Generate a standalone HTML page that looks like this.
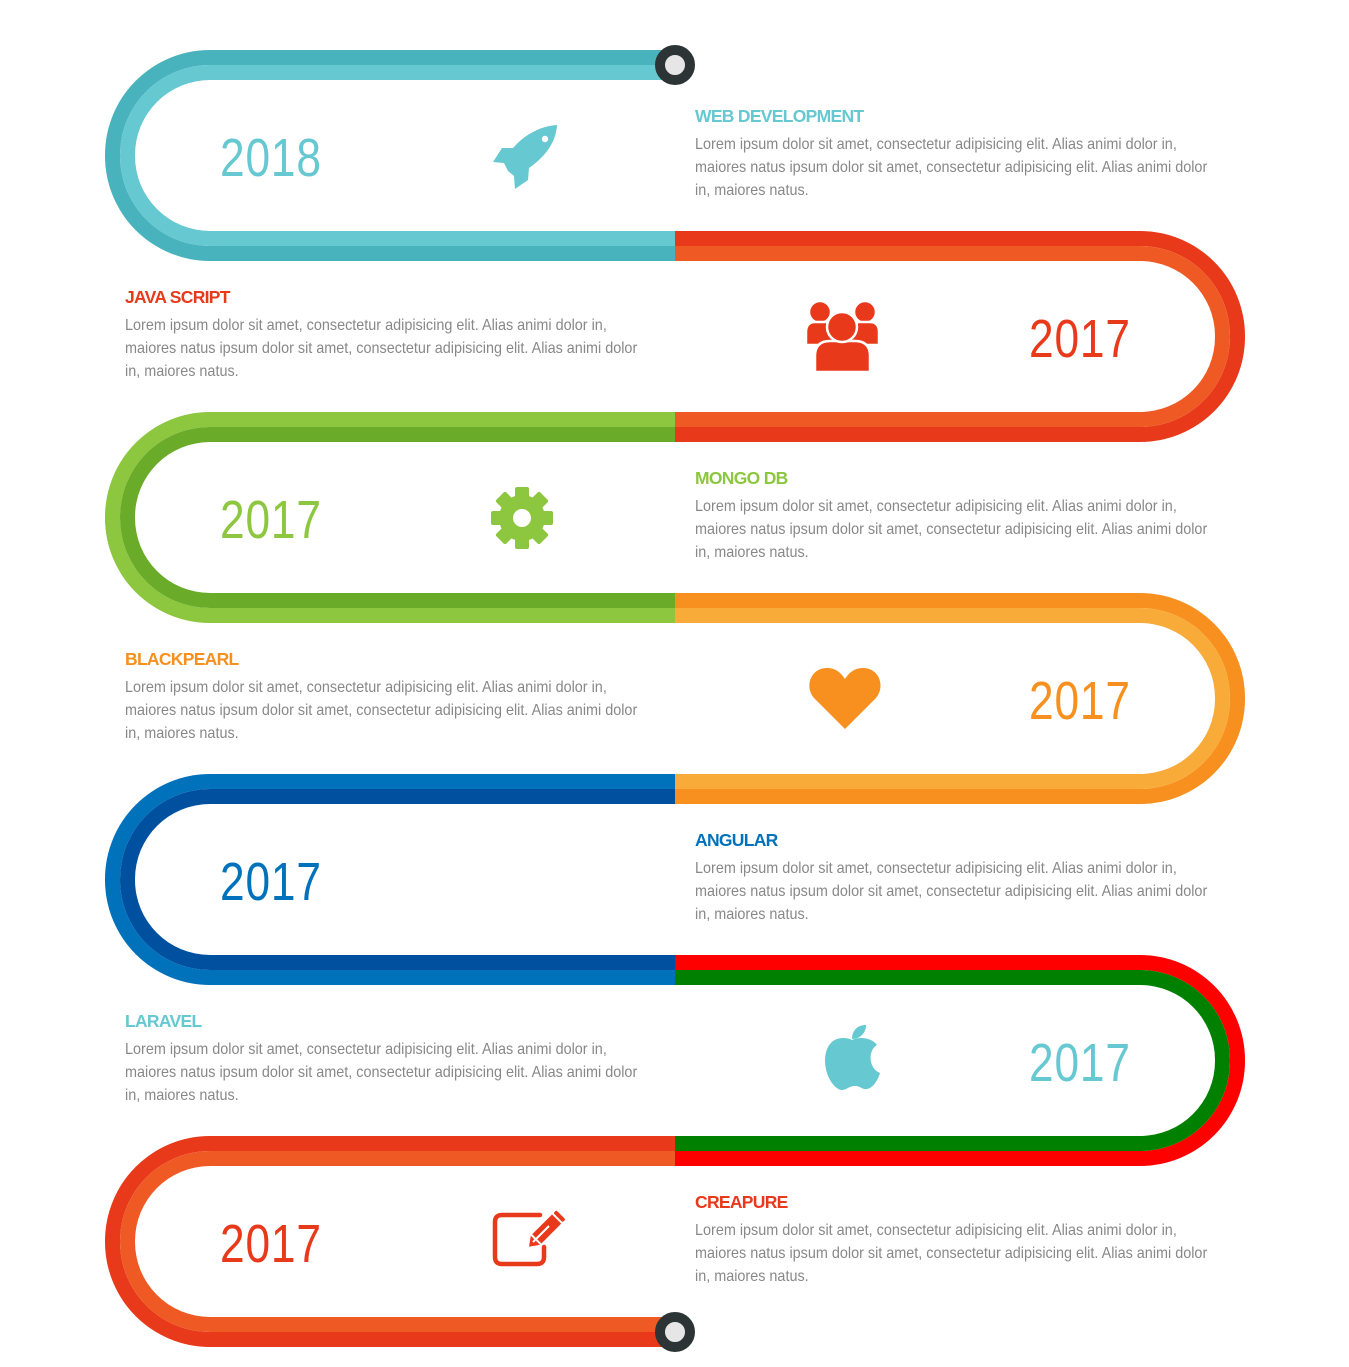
<!DOCTYPE html>
<html><head><meta charset="utf-8">
<style>
html,body{margin:0;padding:0;background:#fff;}
body{width:1349px;height:1367px;position:relative;overflow:hidden;font-family:"Liberation Sans",sans-serif;}
.loop{position:absolute;width:570px;height:211px;box-sizing:border-box;border:15px solid;}
.loop .in{position:absolute;left:0;top:0;right:0;bottom:0;border:15px solid;}
.L{left:105px;border-right:none;border-radius:105px 0 0 105px;}
.L .in{border-right:none;border-radius:90px 0 0 90px;right:0;}
.R{left:675px;border-left:none;border-radius:0 105px 105px 0;}
.R .in{border-left:none;border-radius:0 90px 90px 0;left:0;}
.year{position:absolute;font-size:54px;line-height:54px;transform:scaleX(.82);transform-origin:left top;letter-spacing:1px;}
.t{position:absolute;width:540px;}
.t h3{margin:0;font-size:17.5px;font-weight:bold;letter-spacing:-.7px;line-height:20px;}
.t p{margin:7px 0 0;font-size:16px;line-height:23px;color:#888;white-space:nowrap;transform:scaleX(.9);transform-origin:left top;}
.dot{position:absolute;width:20px;height:20px;border:10px solid #2d3436;border-radius:50%;background:#e6e6e6;}
svg{position:absolute;left:0;top:0;}
</style></head><body>

<div class="loop L" style="top:50px;border-color:#48b2bd"><div class="in" style="border-color:#66c8d0"></div></div>
<div class="loop R" style="top:231px;border-color:#e8391a"><div class="in" style="border-color:#ef5a24"></div></div>
<div class="loop L" style="top:412px;border-color:#8dc63f"><div class="in" style="border-color:#6aab2a"></div></div>
<div class="loop R" style="top:593px;border-color:#f7901e"><div class="in" style="border-color:#f9ab3a"></div></div>
<div class="loop L" style="top:774px;border-color:#0072bc"><div class="in" style="border-color:#0050a0"></div></div>
<div class="loop R" style="top:955px;border-color:#ff0000"><div class="in" style="border-color:#008000"></div></div>
<div class="loop L" style="top:1136px;border-color:#e8391a"><div class="in" style="border-color:#ef5a24"></div></div>

<div class="dot" style="left:655px;top:45px"></div>
<div class="dot" style="left:655px;top:1312px"></div>

<div class="year" style="left:220px;top:131px;color:#66c8d0">2018</div>
<div class="year" style="left:1029px;top:312px;color:#e8391a">2017</div>
<div class="year" style="left:220px;top:493px;color:#8dc63f">2017</div>
<div class="year" style="left:1029px;top:674px;color:#f7901e">2017</div>
<div class="year" style="left:220px;top:855px;color:#0072bc">2017</div>
<div class="year" style="left:1029px;top:1036px;color:#66c8d0">2017</div>
<div class="year" style="left:220px;top:1217px;color:#e8391a">2017</div>

<div class="t" style="left:695px;top:106px"><h3 style="color:#66c8d0">WEB DEVELOPMENT</h3><p>Lorem ipsum dolor sit amet, consectetur adipisicing elit. Alias animi dolor in,<br>maiores natus ipsum dolor sit amet, consectetur adipisicing elit. Alias animi dolor<br>in, maiores natus.</p></div>
<div class="t" style="left:125px;top:287px"><h3 style="color:#e8391a">JAVA SCRIPT</h3><p>Lorem ipsum dolor sit amet, consectetur adipisicing elit. Alias animi dolor in,<br>maiores natus ipsum dolor sit amet, consectetur adipisicing elit. Alias animi dolor<br>in, maiores natus.</p></div>
<div class="t" style="left:695px;top:468px"><h3 style="color:#8dc63f">MONGO DB</h3><p>Lorem ipsum dolor sit amet, consectetur adipisicing elit. Alias animi dolor in,<br>maiores natus ipsum dolor sit amet, consectetur adipisicing elit. Alias animi dolor<br>in, maiores natus.</p></div>
<div class="t" style="left:125px;top:649px"><h3 style="color:#f7901e">BLACKPEARL</h3><p>Lorem ipsum dolor sit amet, consectetur adipisicing elit. Alias animi dolor in,<br>maiores natus ipsum dolor sit amet, consectetur adipisicing elit. Alias animi dolor<br>in, maiores natus.</p></div>
<div class="t" style="left:695px;top:830px"><h3 style="color:#0072bc">ANGULAR</h3><p>Lorem ipsum dolor sit amet, consectetur adipisicing elit. Alias animi dolor in,<br>maiores natus ipsum dolor sit amet, consectetur adipisicing elit. Alias animi dolor<br>in, maiores natus.</p></div>
<div class="t" style="left:125px;top:1011px"><h3 style="color:#66c8d0">LARAVEL</h3><p>Lorem ipsum dolor sit amet, consectetur adipisicing elit. Alias animi dolor in,<br>maiores natus ipsum dolor sit amet, consectetur adipisicing elit. Alias animi dolor<br>in, maiores natus.</p></div>
<div class="t" style="left:695px;top:1192px"><h3 style="color:#e8391a">CREAPURE</h3><p>Lorem ipsum dolor sit amet, consectetur adipisicing elit. Alias animi dolor in,<br>maiores natus ipsum dolor sit amet, consectetur adipisicing elit. Alias animi dolor<br>in, maiores natus.</p></div>

<svg width="1349" height="1367" viewBox="0 0 1349 1367">
<path fill="#66c8d0" d="M557,125 C541,126 525,134 513,148 L502,148 L493,162 L504,163 L508,171 L514,176 L515,189 L528,180 L529,168 C546,156 556,142 557,125 Z"/>
<circle cx="545" cy="139" r="3.2" fill="#fff"/>
<g fill="#e8391a" stroke="#fff" stroke-width="2.5">
<circle cx="820" cy="312" r="11"/>
<circle cx="865" cy="312" r="11"/>
<path d="M806,345 L806,332 Q806,322 815,322 L835,322 L835,345 Z"/>
<path d="M850,345 L850,322 L870,322 Q879,322 879,332 L879,345 Z"/>
<path d="M815,372 L815,356 Q815,341 830,341 L855,341 Q870,341 870,356 L870,372 Z"/>
<circle cx="842" cy="327" r="15"/>
</g>
<g fill="#8dc63f" transform="translate(522,518)">
<circle r="23"/>
<rect x="-7" y="-31" width="14" height="62" rx="2"/>
<rect x="-7" y="-31" width="14" height="62" rx="2" transform="rotate(45)"/>
<rect x="-7" y="-31" width="14" height="62" rx="2" transform="rotate(90)"/>
<rect x="-7" y="-31" width="14" height="62" rx="2" transform="rotate(135)"/>
<circle r="9" fill="#fff"/>
</g>
<path fill="#f7901e" d="M845,729 L815,699 C804,688 810,668 827,668 C836,668 841,673 845,679 C849,673 854,668 863,668 C880,668 886,688 875,699 Z"/>
<path fill="#66c8d0" d="M852,1040 C844,1036 826,1036 825,1060 C825,1078 836,1091 843,1090 C848,1089 849,1086 855,1086 C861,1086 862,1090 867,1089 C873,1088 878,1080 880,1073 C868,1068 868,1050 877,1045 C872,1038 860,1036 852,1040 Z"/>
<path fill="#66c8d0" d="M852,1039 C852,1030 858,1025 866,1025 C866,1033 860,1039 852,1039 Z"/>
<path fill="none" stroke="#e8391a" stroke-width="4.5" stroke-linecap="round" d="M540,1215 L502,1215 Q495,1215 495,1222 L495,1257 Q495,1264 502,1264 L537,1264 Q544,1264 544,1257 L544,1247"/>
<g transform="translate(540,1235) rotate(45)" fill="#e8391a">
<rect x="-6" y="-29" width="13" height="4" rx="1.5"/>
<rect x="-6" y="-23" width="13" height="28"/>
<path d="M-6,7 L7,7 L0.5,16 Z"/>
</g>
<line x1="533" y1="1242" x2="549" y2="1226" stroke="#fff" stroke-width="2"/>
</svg>
</body></html>
